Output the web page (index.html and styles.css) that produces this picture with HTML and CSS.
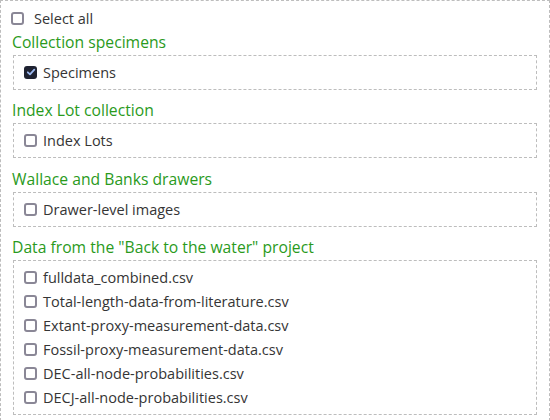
FILE: index.html
```html
<!DOCTYPE html>
<html>
<head>
<meta charset="utf-8">
<link rel="stylesheet" href="styles.css">
</head>
<body>
<div class="panel">
  <label class="row select-all"><span class="box"></span><span>Select all</span></label>

  <h3 class="group-title">Collection specimens</h3>
  <div class="group">
    <label class="row"><span class="box checked"><svg viewBox="0 0 12 12" width="12" height="12"><path d="M2.8 6.3 L5 8.4 L9.3 3.6" fill="none" stroke="#9bb8f0" stroke-width="1.8" stroke-linecap="round" stroke-linejoin="round"/></svg></span><span>Specimens</span></label>
  </div>

  <h3 class="group-title">Index Lot collection</h3>
  <div class="group">
    <label class="row"><span class="box"></span><span>Index Lots</span></label>
  </div>

  <h3 class="group-title">Wallace and Banks drawers</h3>
  <div class="group">
    <label class="row"><span class="box"></span><span>Drawer-level images</span></label>
  </div>

  <h3 class="group-title">Data from the "Back to the water" project</h3>
  <div class="group">
    <label class="row"><span class="box"></span><span>fulldata_combined.csv</span></label>
    <label class="row"><span class="box"></span><span>Total-length-data-from-literature.csv</span></label>
    <label class="row"><span class="box"></span><span>Extant-proxy-measurement-data.csv</span></label>
    <label class="row"><span class="box"></span><span>Fossil-proxy-measurement-data.csv</span></label>
    <label class="row"><span class="box"></span><span>DEC-all-node-probabilities.csv</span></label>
    <label class="row"><span class="box"></span><span>DECJ-all-node-probabilities.csv</span></label>
  </div>
</div>
</body>
</html>
```

FILE: styles.css
```css
html, body {
  margin: 0;
  padding: 0;
  background: #ffffff;
  overflow: hidden;
}

body {
  font-family: "Open Sans", "Liberation Sans", sans-serif;
  color: #353535;
  font-size: 14.5px;
}

.panel {
  box-sizing: border-box;
  width: 550px;
  height: 421px;
  border: 1px dashed #bdbdbd;
  padding: 5.5px 11px 0 10px;
}

.row {
  display: flex;
  align-items: center;
  height: 24px;
  gap: 6px;
}

.select-all {
  gap: 10px;
}

.box {
  box-sizing: border-box;
  width: 13px;
  height: 13px;
  border: 2px solid #8a8796;
  border-radius: 3px;
  background: #fff;
  display: flex;
  align-items: center;
  justify-content: center;
  flex: none;
}

.box.checked {
  border: none;
  background: #1e2231;
}

.box svg {
  display: block;
}

.group-title {
  margin: 0 0 2px 1px;
  font-size: 15.7px;
  font-weight: 400;
  line-height: 22px;
  color: #2a9a1c;
}

.group {
  border: 1px dashed #bdbdbd;
  padding: 4.5px 10px;
  margin: 0 1px 9.5px 2px;
}
```
